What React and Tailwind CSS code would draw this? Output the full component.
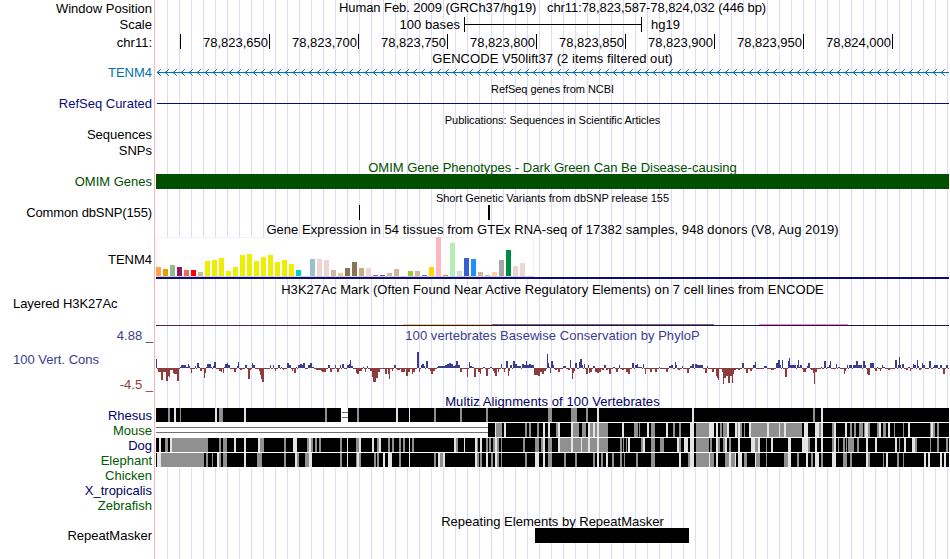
import React from "react";

// GTEx tissues, in display order: [colour, height]
const GTEX_BARS = [
  ["#ffa54f", 9], ["#ee9a00", 7], ["#8fbc8f", 11], ["#8b1c62", 9], ["#ee6a50", 6], ["#ff0000", 6],
  ["#cdb79e", 4], ["#eeee00", 15], ["#eeee00", 16], ["#eeee00", 18], ["#eeee00", 5], ["#eeee00", 9],
  ["#eeee00", 21], ["#eeee00", 22], ["#eeee00", 15], ["#eeee00", 19], ["#eeee00", 21], ["#eeee00", 14],
  ["#eeee00", 16], ["#eeee00", 12], ["#00cdcd", 6], ["#ee82ee", 0], ["#9ac0cd", 17], ["#eed5d2", 17],
  ["#eed5d2", 16], ["#cdb79e", 6], ["#eec591", 3], ["#8b7355", 8], ["#8b7355", 14], ["#cdaa7d", 8],
  ["#eed5d2", 8], ["#b452cd", 1], ["#7a378b", 1], ["#cdb79e", 3], ["#cdb79e", 7], ["#cdb79e", 0],
  ["#9acd32", 5], ["#cdb79e", 5], ["#7a67ee", 1], ["#ffd700", 9], ["#ffb6c1", 39], ["#cd9b1d", 1],
  ["#b4eeb4", 33], ["#d9d9d9", 5], ["#3a5fcd", 18], ["#1e90ff", 17], ["#cdb79e", 4], ["#cdb79e", 1],
  ["#ffd39b", 4], ["#a6a6a6", 16], ["#008b45", 26], ["#eed5d2", 10], ["#eed5d2", 13],
];

// PhyloP scores: [x, width, score], negative scores hang below the baseline
const PHYLOP = [
  [156,1,9],[158,3,-4],[161,2,-12],[163,3,-4],[166,2,-13],[168,1,-8],[169,1,-9],[170,3,-2],[173,1,-5],[174,3,-6],[177,2,-13],
  [180,1,1],[181,5,3],[186,2,1],[188,1,4],[189,1,2],[191,1,-5],[195,1,2],[197,2,5],[199,1,1],[200,2,-3],[204,1,-10],[205,1,-5],
  [206,1,1],[207,4,4],[211,1,1],[213,1,2],[214,2,6],[219,2,-3],[221,1,-4],[223,1,-5],[224,1,1],[225,2,4],[227,1,5],[228,2,3],
  [234,2,-4],[237,1,2],[238,1,6],[240,2,-2],[245,2,3],[248,2,-11],[250,1,-2],[252,1,5],[253,2,3],[259,1,-3],[260,1,-7],[261,1,-11],
  [262,2,-14],[270,1,3],[273,1,3],[275,1,-3],[278,2,3],[281,1,1],[283,1,-2],[287,2,5],[289,2,3],[292,1,-3],[294,2,-5],[296,1,1],
  [298,2,3],[300,2,4],[302,1,3],[303,2,5],[308,2,3],[310,2,5],[312,2,1],[316,5,-2],[321,1,-3],[322,4,-4],[328,2,3],[330,2,-4],
  [335,1,3],[337,2,-4],[340,1,3],[342,2,4],[347,2,3],[349,1,4],[350,1,8],[351,2,2],[356,1,-5],[357,2,-6],[359,3,-3],[363,1,1],
  [365,1,-4],[367,1,2],[370,2,-3],[372,1,-9],[373,3,-14],[376,2,-10],[378,2,-4],[385,2,-6],[388,1,-6],[389,1,-11],[392,1,-3],
  [394,2,3],[397,3,-2],[401,4,-4],[406,2,-8],[408,2,-4],[412,1,-6],[413,2,-4],[417,2,16],[419,1,-4],[421,1,3],[422,2,4],[424,1,2],
  [426,2,7],[430,1,-3],[431,2,-6],[433,2,-3],[437,1,1],[438,7,2],[445,2,3],[447,2,4],[449,2,5],[451,2,4],[453,2,2],[455,1,3],
  [456,2,7],[458,2,3],[460,2,-4],[467,1,-9],[469,1,6],[470,2,2],[472,2,1],[474,2,-9],[478,2,-4],[480,1,-6],[483,2,1],[486,2,-8],
  [490,2,1],[493,1,-3],[494,1,-5],[495,2,-8],[498,1,-4],[501,1,4],[504,1,-4],[506,2,7],[508,1,-8],[509,1,-3],[510,2,3],[513,2,7],
  [515,2,4],[517,4,2],[522,2,4],[524,2,3],[526,1,7],[527,2,3],[529,2,4],[531,3,3],[534,4,-7],[538,2,-8],[540,2,-4],[542,2,-6],
  [544,2,-3],[547,1,14],[548,1,5],[549,1,1],[550,1,-5],[551,2,7],[553,1,3],[555,2,-2],[558,2,-4],[563,3,2],[568,2,-2],[570,1,8],
  [572,1,-11],[573,1,-5],[574,1,-3],[575,2,5],[579,1,6],[580,2,9],[582,1,3],[584,1,4],[586,2,-6],[588,1,3],[589,1,-5],[590,2,-4],
  [593,2,2],[595,2,-4],[597,2,-5],[599,2,-4],[602,2,-2],[604,2,3],[606,2,-2],[609,2,-6],[613,2,1],[616,2,-4],[619,1,3],[622,2,-2],
  [626,2,-4],[628,2,-6],[632,2,5],[635,2,3],[637,1,4],[638,4,1],[643,1,4],[645,1,-6],[650,2,-4],[655,2,-4],[659,1,1],[666,2,-4],
  [669,2,2],[671,2,3],[675,1,6],[676,1,3],[678,2,-2],[682,1,2],[687,2,-5],[690,2,2],[692,2,4],[695,2,4],[697,6,3],[705,2,-5],
  [707,1,2],[712,2,-4],[716,1,-8],[717,1,-10],[718,1,-12],[722,1,-4],[723,1,-16],[724,2,-10],[726,2,-8],[728,2,-15],[730,2,-8],
  [732,1,-15],[733,1,-6],[734,2,-2],[738,2,-2],[742,2,5],[746,2,-5],[750,2,-3],[753,2,3],[755,1,6],[764,3,2],[771,3,-2],[776,2,5],
  [778,2,8],[780,1,3],[782,1,8],[785,2,-9],[788,1,7],[789,1,10],[790,6,3],[797,1,3],[798,1,8],[799,1,1],[800,2,3],[803,3,-4],
  [807,1,2],[808,2,5],[811,2,-2],[813,1,-5],[814,1,-16],[815,2,-4],[821,1,1],[824,2,7],[827,2,1],[829,1,3],[830,1,7],[836,1,4],
  [838,2,1],[844,1,-6],[845,1,-3],[847,1,3],[849,3,3],[853,3,3],[856,2,7],[858,4,3],[863,2,7],[865,1,3],[867,1,-6],[868,2,-7],
  [870,4,5],[875,2,-3],[877,1,1],[880,1,-3],[882,1,3],[883,2,1],[888,2,-2],[895,2,8],[898,1,3],[899,1,11],[900,1,3],[902,2,4],
  [906,2,-2],[908,2,1],[910,1,-3],[913,1,4],[914,2,3],[917,1,8],[918,1,2],[919,2,-2],[922,1,5],[923,2,3],[929,2,7],[933,1,1],
  [934,4,3],[940,2,3],[943,2,-6],[946,2,3],
];

// Mismatched columns of each alignment: grey = partial, light = weak
const ALIGNMENTS = {
  Rhesus: {
    gaps: [[341, 7]],
    grey: [[168,2],[180,1],[219,4],[325,2],[357,2],[434,2],[460,2],[486,2],[548,4],[571,6],[586,2],[813,2]],
    light: [[174,2],[215,2],[244,2],[396,2],[409,1],[597,2],[692,2],[821,2]],
  },
  Mouse: {
    gaps: [[155, 333]],
    grey: [[496,6],[525,2],[529,2],[537,2],[556,2],[573,6],[582,4],[590,3],[595,2],[599,9],[634,4],[639,1],[651,4],[673,2],[679,2],[696,13],[720,2],[723,4],[737,1],[740,2],[744,1],[751,16],[769,10],[780,4],[786,16],[819,2],[832,2],[850,2],[854,2],[859,4],[864,1],[868,2],[877,2],[883,3],[894,1],[903,1],[930,1],[933,2],[937,2]],
    light: [[495,1],[504,2],[543,2],[548,2],[558,2],[571,2],[588,2],[593,2],[597,2],[622,2],[647,2],[666,2],[690,4],[709,5],[716,2],[727,2],[735,2],[738,2],[749,2],[767,2],[779,1],[784,2],[804,4],[815,4],[821,2],[834,2],[845,2],[865,3],[879,2],[888,2],[908,2],[931,2]],
  },
  Dog: {
    gaps: [],
    grey: [[165,3],[172,36],[219,2],[223,4],[260,4],[284,2],[307,2],[311,2],[315,2],[319,2],[340,2],[356,3],[377,2],[388,2],[392,2],[399,2],[403,2],[412,2],[456,2],[477,1],[486,2],[489,2],[493,2],[497,2],[501,1],[523,2],[535,4],[541,2],[548,4],[560,48],[620,2],[623,1],[626,1],[641,2],[651,4],[660,4],[679,2],[696,13],[710,2],[718,2],[723,2],[729,2],[755,3],[766,1],[808,2],[832,2],[838,1],[843,2],[846,1],[848,6],[857,2],[899,1],[915,2],[930,1],[937,2],[946,2]],
    light: [[159,2],[170,2],[234,2],[244,2],[258,2],[293,4],[309,2],[347,1],[359,2],[372,2],[379,2],[409,1],[454,2],[464,1],[475,2],[480,2],[495,2],[543,2],[558,2],[571,2],[581,1],[588,2],[597,2],[628,2],[643,2],[677,2],[684,4],[690,4],[716,2],[725,2],[738,2],[751,4],[758,2],[771,2],[788,3],[802,6],[815,2],[821,2],[834,2],[866,2],[875,2],[895,2],[904,2],[912,3]],
  },
  Elephant: {
    gaps: [],
    grey: [[161,43],[206,2],[212,1],[219,2],[223,4],[257,5],[284,2],[297,2],[305,4],[340,2],[356,1],[359,2],[374,2],[377,2],[399,2],[434,2],[440,3],[477,2],[480,2],[491,2],[497,2],[501,1],[525,2],[548,4],[564,2],[575,2],[593,2],[601,2],[612,2],[620,2],[624,1],[636,2],[651,4],[688,2],[696,13],[710,4],[725,4],[731,4],[744,3],[756,4],[766,1],[784,4],[797,2],[811,2],[821,2],[843,4],[850,2],[868,2],[883,1],[897,2],[903,1]],
    light: [[157,4],[217,2],[244,2],[295,2],[309,3],[347,1],[357,2],[383,2],[388,4],[409,1],[438,2],[443,2],[475,2],[486,2],[495,2],[535,4],[543,2],[597,2],[606,2],[679,2],[690,4],[709,1],[716,2],[729,2],[735,1],[738,4],[755,1],[788,3],[806,2],[815,4],[832,4],[866,2],[886,2],[924,2],[928,2],[940,2],[944,2]],
  },
};

const RULER = [
  "78,823,650", "78,823,700", "78,823,750", "78,823,800",
  "78,823,850", "78,823,900", "78,823,950", "78,824,000",
];

const Row = ({ label, className = "h-[15px]", labelClass = "pr-[4px]", children }) => (
  <div className={`flex shrink-0 ${className}`}>
    <div className={`flex w-[156px] shrink-0 items-center justify-end leading-none whitespace-pre ${labelClass}`}>
      {label}
    </div>
    <div className="flex w-[793px] shrink-0">{children}</div>
  </div>
);

const Title = ({ className = "", textClass = "pt-[2px]", label, labelClass, children }) => (
  <Row label={label} labelClass={labelClass} className={className}>
    <div className={`flex w-full items-center justify-center leading-none whitespace-pre ${textClass}`}>
      {children}
    </div>
  </Row>
);

const Strand = () => (
  <svg width="793" height="15" viewBox="156 0 793 15" shapeRendering="crispEdges" fill="#0072b2">
    <rect x="157" y="7" width="792" height="1" />
    {Array.from({ length: 99 }, (_, i) => 157 + i * 8).map((x) => (
      <g key={x}>
        <rect x={x} y="6" width="1" height="3" fillOpacity="0.35" />
        <rect x={x + 1} y="6" width="1" height="3" />
        <rect x={x + 2} y="5" width="1" height="1" />
        <rect x={x + 2} y="9" width="1" height="1" />
        <rect x={x + 3} y="4" width="1" height="1" fillOpacity="0.7" />
        <rect x={x + 3} y="10" width="1" height="1" fillOpacity="0.7" />
      </g>
    ))}
  </svg>
);

const Phylop = () => (
  <svg width="793" height="51" viewBox="156 343 793 51" shapeRendering="crispEdges">
    {PHYLOP.map(([x, w, v], i) => {
      const end = x + w;
      const next = i + 1 < PHYLOP.length ? PHYLOP[i + 1][0] : 949;
      return (
        <g key={x}>
          <rect
            x={x}
            y={v > 0 ? 368 - v : 368}
            width={w}
            height={Math.abs(v)}
            fill={v > 0 ? "#3c3c8c" : "#8c3c3c"}
          />
          {/* near-zero scores up to the next bar */}
          {next > end && <rect x={end} y="368" width={next - end} height="1" fill="#8c3c3c" />}
        </g>
      );
    })}
  </svg>
);

const Alignment = ({ gaps, grey, light }) => (
  <svg width="793" height="15" viewBox="156 0 793 15" shapeRendering="crispEdges">
    <rect x="156" y="0" width="793" height="15" fill="#fff" />
    <rect x="156" y="0" width="793" height="14" fill="#000" />
    {grey.map(([x, w]) => <rect key={x} x={x} y="0" width={w} height="14" fill="#909090" />)}
    {light.map(([x, w]) => <rect key={x} x={x} y="0" width={w} height="14" fill="#e4e4e4" />)}
    {gaps.map(([x, w]) => (
      <g key={x}>
        <rect x={x} y="0" width={w} height="14" fill="#fff" />
        <rect x={x + 1} y="4" width={w - 1} height="1" fill="#707070" />
        <rect x={x + 1} y="9" width={w - 1} height="1" fill="#707070" />
      </g>
    ))}
  </svg>
);

const App = () => (
  <div className="h-[559px] w-[950px] overflow-hidden bg-white">
    <div className="flex h-full w-[949px] flex-col font-['Liberation_Sans',Arial,sans-serif] text-[13px] text-black [background:linear-gradient(#ffb4b4,#ffb4b4)_154px_0/1px_100%_no-repeat,repeating-linear-gradient(to_right,#dcdcfa_0_1px,transparent_1px_12px)_167px_0/782px_100%_no-repeat]">
      {/* Position and ruler */}
      <Title className="h-[17px]" textClass="pb-[2px] tracking-[-0.07px]" label="Window Position">
        {"Human Feb. 2009 (GRCh37/hg19)   chr11:78,823,587-78,824,032 (446 bp)"}
      </Title>
      <Row className="h-[17px]" label="Scale" labelClass="pr-[4px] pb-[2px]">
        <div className="flex w-[304px] items-center justify-end pb-[2px] leading-none tracking-[0.05px]">100 bases</div>
        <div className="ml-[4px] flex h-[15px] w-[178px] items-center border-x border-black">
          <div className="h-px w-full bg-black" />
        </div>
        <div className="ml-[9px] flex items-center pb-[2px] leading-none">hg19</div>
      </Row>
      <Row className="h-[16px]" label="chr11:">
        <div className="h-[15px] w-[25px] border-r border-black" />
        {RULER.map((pos) => (
          <div key={pos} className="flex h-[15px] w-[89px] items-center justify-end border-r border-black pt-[2px] pr-px leading-none">
            {pos}
          </div>
        ))}
      </Row>

      {/* Genes */}
      <Title className="h-[15px]" textClass="pt-[2px] tracking-[0.05px]">GENCODE V50lift37 (2 items filtered out)</Title>
      <Row label="TENM4" labelClass="pr-[4px] text-[#0072b2]">
        <Strand />
      </Row>
      <Title className="h-[16px] text-[11px]" textClass="pt-[2px] tracking-[-0.05px]">RefSeq genes from NCBI</Title>
      <Row label="RefSeq Curated" labelClass="pr-[4px] text-[#0c0c78]">
        <div className="mt-[7px] ml-px h-px w-[792px] bg-[#0c0c78]" />
      </Row>
      <Title className="h-[16px] text-[11px]" textClass="pt-[2px] tracking-[-0.05px]">
        Publications: Sequences in Scientific Articles
      </Title>
      <Row label="Sequences" />
      <Row className="h-[16px]" label="SNPs" />
      <Title className="h-[16px] text-[#005000]">OMIM Gene Phenotypes - Dark Green Can Be Disease-causing</Title>
      <Row label="OMIM Genes" labelClass="pr-[4px] text-[#005000]">
        <div className="w-full bg-[#005000]" />
      </Row>

      {/* Variants */}
      <Title className="h-[16px] text-[11px]">Short Genetic Variants from dbSNP release 155</Title>
      <Row label="Common dbSNP(155)" labelClass="pr-[4px] tracking-[-0.12px]">
        <div className="ml-[203px] w-px bg-black" />
        <div className="ml-[128px] w-[2px] bg-black" />
      </Row>

      {/* Expression */}
      <Title className="h-[17px]" textClass="pt-[2px] tracking-[0.055px]">
        Gene Expression in 54 tissues from GTEx RNA-seq of 17382 samples, 948 donors (V8, Aug 2019)
      </Title>
      <Row className="h-[44px]" label="TENM4">
        <div className="flex w-full flex-col">
          <svg width="378" height="40" shapeRendering="crispEdges">
            <rect width="378" height="40" fill="#f2f2f5" />
            <rect x="1" y="1" width="376" height="38" fill="#fff" />
            <rect y="39" width="378" height="1" fill="#d3d3d3" />
            {GTEX_BARS.map(([color, h], i) => (
              <rect key={i} x={i * 7} y={39 - h} width="5" height={h} fill={color} />
            ))}
          </svg>
          <div className="h-[2px] bg-[#0c0c78]" />
        </div>
      </Row>

      {/* Regulation */}
      <Title className="h-[16px]" textClass="tracking-[0.06px]">
        H3K27Ac Mark (Often Found Near Active Regulatory Elements) on 7 cell lines from ENCODE
      </Title>
      <Row className="h-[31px]" label="Layered H3K27Ac" labelClass="h-[13px] justify-start pl-[13px] tracking-[-0.07px]">
        <svg width="793" height="31" viewBox="156 297 793 31" shapeRendering="crispEdges">
          <rect x="403" y="324" width="89" height="1" fill="#ffc864" />
          <rect x="492" y="324" width="222" height="1" fill="#806080" />
          <rect x="759" y="324" width="89" height="1" fill="#ff78d2" />
          <rect x="156" y="325" width="158" height="1" fill="#502846" />
          <rect x="314" y="325" width="635" height="1" fill="#1e1446" />
        </svg>
      </Row>

      {/* Conservation */}
      <Title
        className="h-[15px] text-[#3c3c8c]"
        textClass="tracking-[0.05px]"
        label="4.88 _"
        labelClass="pr-[3px] pb-px"
      >
        100 vertebrates Basewise Conservation by PhyloP
      </Title>
      <Row
        className="h-[51px]"
        labelClass="flex-col items-stretch"
        label={
          <>
            <span className="flex h-[33px] items-center pl-[13px] text-[#3c3c8c]">100 Vert. Cons</span>
            <span className="flex h-[18px] items-center justify-end pr-[3px] pb-[2px] text-[#8c3c3c]">-4.5 _</span>
          </>
        }
      >
        <Phylop />
      </Row>
      <Title className="h-[14px] text-[#000064]" textClass="pt-px tracking-[0.1px]">Multiz Alignments of 100 Vertebrates</Title>
      <Row label="Rhesus" labelClass="pr-[4px] text-[#000064]"><Alignment {...ALIGNMENTS.Rhesus} /></Row>
      <Row label="Mouse" labelClass="pr-[4px] text-[#005a00]"><Alignment {...ALIGNMENTS.Mouse} /></Row>
      <Row label="Dog" labelClass="pr-[4px] text-[#000064]"><Alignment {...ALIGNMENTS.Dog} /></Row>
      <Row label="Elephant" labelClass="pr-[4px] text-[#005a00]"><Alignment {...ALIGNMENTS.Elephant} /></Row>
      <Row label="Chicken" labelClass="pr-[4px] text-[#005a00]" />
      <Row label="X_tropicalis" labelClass="pr-[4px] text-[#000064]" />
      <Row label="Zebrafish" labelClass="pr-[4px] text-[#005a00]" />

      {/* Repeats */}
      <Title className="h-[15px]">Repeating Elements by RepeatMasker</Title>
      <Row label="RepeatMasker">
        <div className="ml-[379px] w-[154px] bg-black" />
      </Row>
    </div>
  </div>
);

export default App;
